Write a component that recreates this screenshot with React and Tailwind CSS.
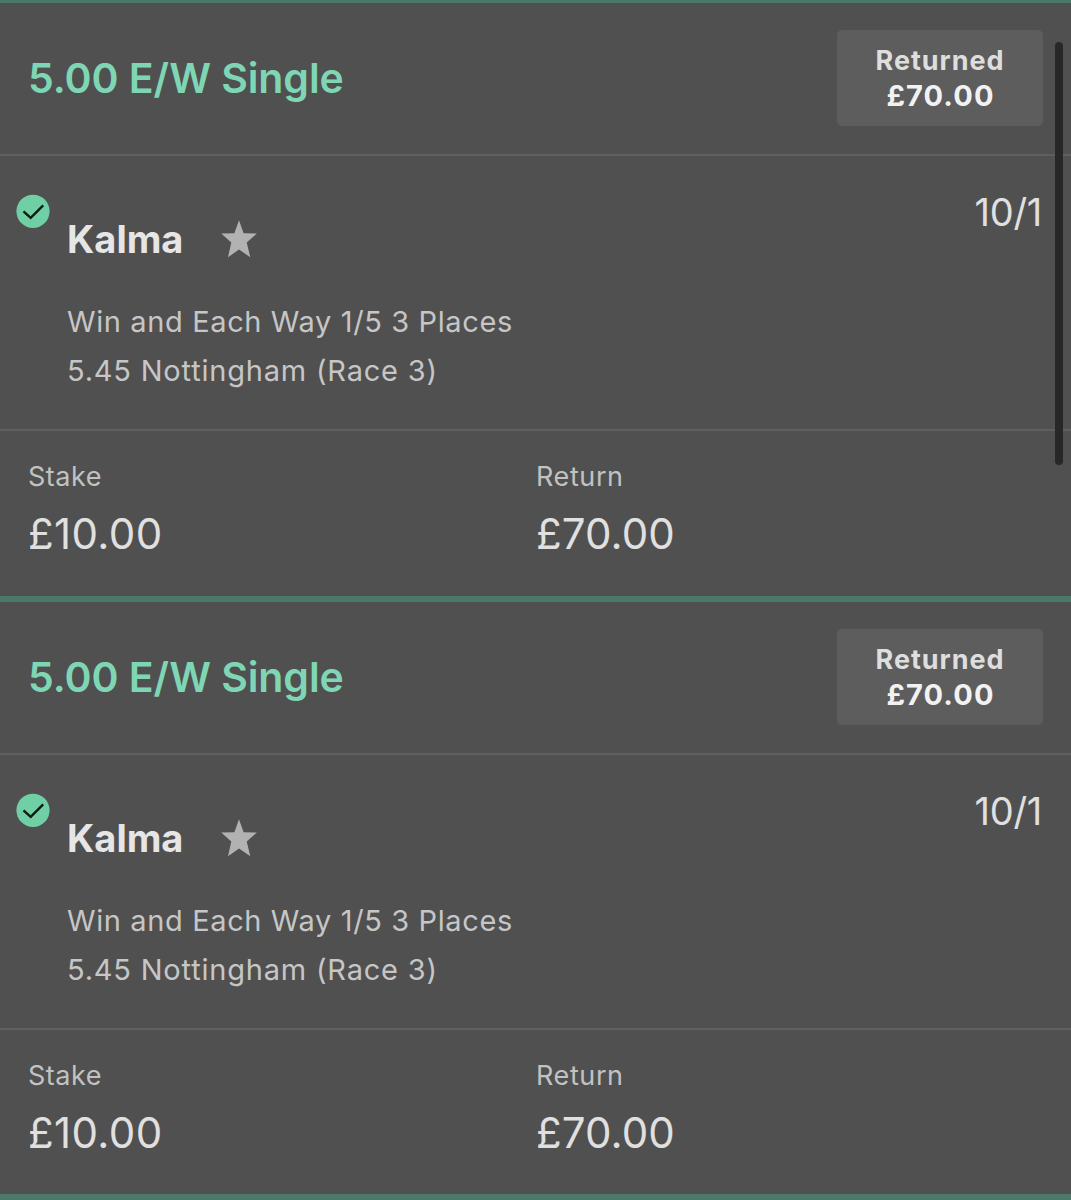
import React from "react";

const bets = [
  {
    id: 1,
    title: "5.00 E/W Single",
    selection: "Kalma",
    odds: "10/1",
    market: "Win and Each Way 1/5 3 Places",
    event: "5.45 Nottingham (Race 3)",
    stake: "£10.00",
    returned: "£70.00",
  },
  {
    id: 2,
    title: "5.00 E/W Single",
    selection: "Kalma",
    odds: "10/1",
    market: "Win and Each Way 1/5 3 Places",
    event: "5.45 Nottingham (Race 3)",
    stake: "£10.00",
    returned: "£70.00",
  },
];

const WonIcon = () => (
  <svg className="block h-[34px] w-[34px]" viewBox="0 0 34 34" fill="none">
    <circle cx="17" cy="17.3" r="16.6" fill="#71cfa6" />
    <path d="M7.5 17.4 L14.7 23.8 L27.2 11.4" stroke="#0c1c15" strokeWidth="2.4" />
  </svg>
);

const StarIcon = () => (
  <svg className="block h-[38px] w-[36px]" viewBox="0 0 36 38">
    <path
      d="M18 0.3 L22.6 13.2 L35.8 13.6 L25.7 22.4 L29.3 37.3 L18 29.4 L7 37.3 L10.3 22.4 L0.2 13.6 L13.4 13.2 Z"
      fill="#b2b2b2"
    />
  </svg>
);

const BetCard = ({ bet }) => {
  return (
    <div className="shrink-0">
      <div className="flex h-[151px] items-center justify-between pb-px pl-[28px] pr-[28px]">
        <h2 className="text-[41px] leading-[50px] font-semibold tracking-[-0.08px] text-[#7fd6b4]">{bet.title}</h2>
        <div className="flex h-[96px] w-[206px] flex-col items-center justify-center rounded-[5px] bg-[#5d5d5d] font-bold">
          <span className="text-[27px] leading-[35px] tracking-[0.95px] text-[#dedede]">Returned</span>
          <span className="pl-px text-[29px] leading-[35px] tracking-[1.1px] text-[#f2f2f2]">{bet.returned}</span>
        </div>
      </div>

      <div className="flex h-[275px] items-start border-t-2 border-[#5f5f5f] pl-4 pr-[29px]">
        <div className="mt-[38px] mr-[17px]">
          <WonIcon />
        </div>
        <div className="mt-[58px] flex-1">
          <div className="flex h-[50px] items-center">
            <span className="w-[115px] text-[38px] leading-[50px] font-bold text-[#e6e6e6]">{bet.selection}</span>
            <div className="ml-[39px]">
              <StarIcon />
            </div>
          </div>
          <div className="mt-[33px] text-[29px] leading-[49px] text-[#c6c6c6]">
            <p className="tracking-[0.62px]">{bet.market}</p>
            <p className="tracking-[0.8px]">{bet.event}</p>
          </div>
        </div>
        <span className="mt-[31px] text-[38px] leading-[50px] font-normal tracking-[-0.3px] text-[#e0e0e0]">{bet.odds}</span>
      </div>

      <div className="flex h-[166.5px] border-t-2 border-[#5f5f5f] pt-[30px] pl-[28px]">
        <div className="w-[508px]">
          <p className="text-[27px] leading-[32px] tracking-[0.5px] text-[#c2c2c2]">Stake</p>
          <p className="mt-[16px] text-[42px] leading-[50px] font-normal tracking-[0.4px] text-[#e0e0e0]">{bet.stake}</p>
        </div>
        <div>
          <p className="text-[27px] leading-[32px] tracking-[0.6px] text-[#c2c2c2]">Return</p>
          <p className="mt-[16px] text-[42px] leading-[50px] font-normal tracking-[0.1px] text-[#e0e0e0]">{bet.returned}</p>
        </div>
      </div>
      <div className="h-[6px] bg-[#4b7968]" />
    </div>
  );
};

const App = () => {
  return (
    <div className="relative flex h-[1200px] w-[1071px] flex-col overflow-hidden bg-[#505050] font-['Inter',sans-serif]">
      <div className="h-[3px] shrink-0 bg-[#4b7968]" />
      {bets.map((bet) => (
        <BetCard key={bet.id} bet={bet} />
      ))}
      {/* scroll indicator */}
      <div className="absolute top-[42px] right-[8px] h-[423px] w-[8px] rounded-full bg-[#272727]" />
    </div>
  );
};

export default App;
